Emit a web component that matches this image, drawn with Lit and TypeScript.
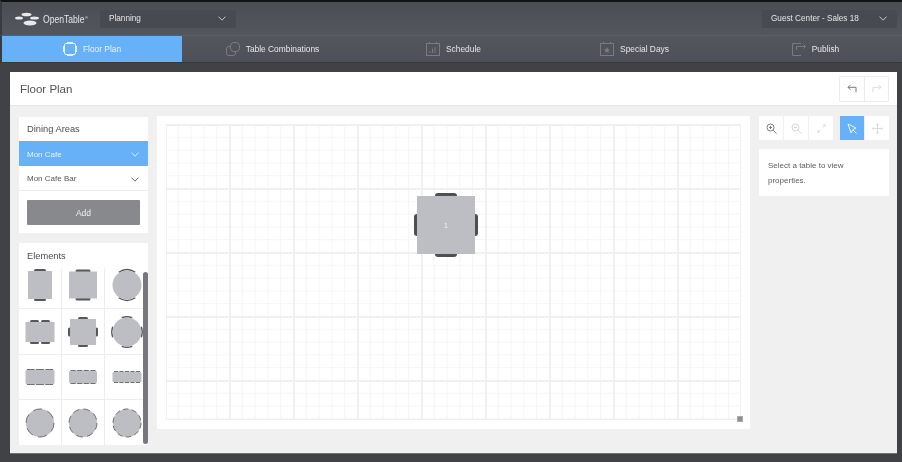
import { LitElement, html, css, svg } from "lit";
import { customElement } from "lit/decorators.js";

const FILL = "#bdbec3";
const SEAT = "#55575c";
const DASH = "#6e7075";

const chevron = html`<svg class="chev" width="8" height="5" viewBox="0 0 8 5"><path d="M.5.6 4 4.200 7.500.6" fill="none" stroke="currentColor" stroke-width=".9"/></svg>`;

// a square table with a seat bar on some of its sides
function rectTable(w: number, h: number, top: number[][], bottom: number[][], side = 0) {
  const x = 21 - w / 2;
  const y = 22 - h / 2;
  const bars = (list: number[][], yy: number) =>
    list.map(([a, len]) => svg`<rect x=${a} y=${yy} width=${len} height="3" rx="1.500" fill=${SEAT}/>`);
  return svg`
    ${bars(top, y - 2)}
    ${bars(bottom, y + h - 1)}
    ${side ? svg`<rect x=${x - 2} y=${22 - side / 2} width="3" height=${side} rx="1.500" fill=${SEAT}/>
      <rect x=${x + w - 1} y=${22 - side / 2} width="3" height=${side} rx="1.500" fill=${SEAT}/>` : ""}
    <rect x=${x} y=${y} width=${w} height=${h} fill=${FILL}/>`;
}

function seats(count: number, len: number, gap: number) {
  const total = count * len + (count - 1) * gap;
  const start = 21 - total / 2;
  return Array.from({ length: count }, (_, i) => [start + i * (len + gap), len]);
}

function dashedRect(w: number, h: number, count: number) {
  const x = 21 - w / 2;
  const y = 22 - h / 2;
  const gap = 1.500;
  const dash = (w - 3 - gap * (count - 1)) / count;
  const line = (yy: number) =>
    svg`<line x1=${x + 1.500} x2=${x + w - 1.500} y1=${yy} y2=${yy} stroke=${DASH} stroke-dasharray="${dash} ${gap}"/>`;
  return svg`<rect x=${x} y=${y} width=${w} height=${h} rx="2" fill=${FILL}/>${line(y)}${line(y + h)}`;
}

function arcSeat(r: number, deg: number, sweep: number) {
  const pt = (a: number) => {
    const t = (a * Math.PI) / 180;
    return `${21 + r * Math.cos(t)} ${22 + r * Math.sin(t)}`;
  };
  return svg`<path d="M${pt(deg - sweep / 2)}A${r} ${r} 0 0 1 ${pt(deg + sweep / 2)}" fill="none" stroke=${SEAT} stroke-width="1.400"/>`;
}

function roundTable(r: number, angles: number[], sweep: number) {
  return svg`${angles.map((a) => arcSeat(r + 0.7, a, sweep))}<circle cx="21" cy="22" r=${r} fill=${FILL}/>`;
}

function dashedRound(r: number, count: number) {
  const c = 2 * Math.PI * r;
  const on = (c / count) * 0.62;
  return svg`<circle cx="21" cy="22" r=${r} fill=${FILL} stroke=${DASH} stroke-width="1" stroke-dasharray="${on} ${c / count - on}"/>`;
}

const elementsList = [
  rectTable(24, 28, seats(1, 12, 0), seats(1, 12, 0)),
  rectTable(28, 27, seats(1, 15, 0), seats(1, 15, 0)),
  roundTable(14.5, [-90, 90], 66),
  rectTable(29, 20, seats(2, 9, 2), seats(2, 9, 2)),
  rectTable(26, 26, seats(1, 10, 0), seats(1, 10, 0), 9),
  roundTable(14.5, [-90, 0, 90, 180], 40),
  dashedRect(29, 15, 3),
  dashedRect(28, 13, 4),
  dashedRect(29, 11, 5),
  dashedRound(14, 6),
  dashedRound(14, 8),
  dashedRound(14, 10),
];

const navItems = [
  {
    label: "Floor Plan",
    icon: svg`<rect x="1.500" y="1.500" width="11" height="11" rx="1.500"/><path d="M4 .5h6M4 13.500h6M.5 4v6M13.500 4v6"/>`,
  },
  {
    label: "Table Combinations",
    icon: svg`<rect x="4.500" y=".5" width="9" height="9" rx="3.500"/><path d="M4 4.500H3A2.500 2.500 0 0 0 .5 7v4A2.500 2.500 0 0 0 3 13.500h4A2.500 2.500 0 0 0 9.500 11v-1"/>`,
  },
  {
    label: "Schedule",
    icon: svg`<rect x=".5" y="1.500" width="13" height="12"/><path d="M3.500 0v2M10.500 0v2M4 11V9M6.500 11V6.500M9 11V5"/>`,
  },
  {
    label: "Special Days",
    icon: svg`<rect x=".5" y="1.500" width="13" height="12"/><path d="M3.500 0v2M10.500 0v2"/><path d="m7 5 1 2.200 2 .2-1.500 1.400.4 2L7 9.900l-1.900.9.400-2L4 7.400l2-.2z" fill="currentColor" stroke="none"/>`,
  },
  {
    label: "Publish",
    icon: svg`<path d="M9 13.500H.5V1.500H9M4.500 8V4.500h9M11.500 2.500l2 2-2 2"/>`,
  },
];

@customElement("app-root")
export class AppRoot extends LitElement {
  static styles = css`
    * {
      margin: 0;
      padding: 0;
      box-sizing: border-box;
    }
    :host {
      display: flex;
      flex-direction: column;
      width: 902px;
      height: 462px;
      overflow: hidden;
      background: #404246;
      font-family: "Liberation Sans", Arial, sans-serif;
      color: #55575c;
      filter: blur(0.35px);
    }
    .topbar {
      height: 35px;
      flex: none;
      border-top: 2px solid #111214;
      border-left: 2px solid #3a3b3f;
      background: linear-gradient(#4b4d54, #53565d);
      display: flex;
      align-items: center;
      padding: 0 5px 0 13px;
    }
    .logo {
      display: flex;
      align-items: center;
      gap: 4px;
      width: 85px;
      color: #e4e5e7;
      font-size: 11px;
      white-space: nowrap;
    }
    .logo .name {
      display: inline-block;
      width: 41px;
      transform: scaleX(0.78);
      transform-origin: left center;
    }
    .logo .tm {
      font-size: 4px;
      align-self: flex-start;
      margin: 3px 0 0 -3px;
    }
    .select {
      height: 18px;
      background: #484a51;
      border-radius: 2px;
      color: #e6e6e8;
      font-size: 8.200px;
      display: flex;
      align-items: center;
      justify-content: space-between;
      padding: 0 10px 0 9px;
    }
    .select.plan {
      width: 136px;
    }
    .select.guest {
      width: 135px;
      margin-left: auto;
    }
    .select .chev {
      color: #d4d5d8;
    }
    .nav {
      height: 28px;
      flex: none;
      border-top: 1px solid #5c5e65;
      border-left: 2px solid #3a3b3f;
      border-bottom: 1px solid #36383c;
      background: linear-gradient(#53565d, #4d5056);
      display: grid;
      grid-template-columns: 180px repeat(4, 181px);
      overflow: hidden;
    }
    .nav-item {
      display: flex;
      align-items: center;
      justify-content: center;
      gap: 6px;
      color: #e6e7e9;
      font-size: 8.400px;
    }
    .nav-item svg {
      color: #797b80;
    }
    .nav-item.active {
      background: #66b1f8;
      color: #eaf4fe;
    }
    .nav-item.active svg {
      color: #e4f1fe;
    }
    .card {
      flex: 1;
      min-height: 0;
      margin: 9px 5px 9px 10px;
      background: #f0f0f0;
      display: flex;
      flex-direction: column;
      box-shadow: 0 1px 0 #707277;
    }
    .title {
      height: 34px;
      flex: none;
      background: #fff;
      border-bottom: 1px solid #e6e6e6;
      display: flex;
      align-items: center;
      justify-content: space-between;
      padding: 0 8px 0 10px;
      font-size: 11.500px;
      color: #505257;
    }
    .history {
      display: flex;
      border: 1px solid #ececec;
      border-radius: 1px;
    }
    .history span {
      width: 24px;
      height: 24px;
      display: flex;
      align-items: center;
      justify-content: center;
      color: #77797d;
    }
    .history span + span {
      border-left: 1px solid #ececec;
      color: #dcdcdc;
    }
    .main {
      flex: 1;
      min-height: 0;
      display: grid;
      grid-template-columns: 129px 593px 130px;
      column-gap: 9px;
      padding: 10px 0 0 9px;
    }
    .side {
      display: flex;
      flex-direction: column;
      gap: 10px;
      padding-top: 1px;
    }
    .panel {
      background: #fff;
    }
    .panel h2 {
      height: 24px;
      display: flex;
      align-items: center;
      padding-left: 8px;
      font-size: 9.300px;
      font-weight: 400;
      color: #4b4d52;
    }
    .area {
      height: 25px;
      display: flex;
      align-items: center;
      justify-content: space-between;
      padding: 1px 9px 0 8px;
      font-size: 8px;
      border-bottom: 1px solid #ededed;
    }
    .area.active {
      background: #66b1f8;
      color: #e6f2fe;
      border-bottom: none;
    }
    .area .chev {
      margin-top: 1px;
    }
    .add-wrap {
      padding: 9px 8px 8px;
    }
    .add {
      width: 100%;
      height: 25px;
      border: none;
      border-radius: 1px;
      background: #88898d;
      color: #f0f0f1;
      font: inherit;
      font-size: 8.500px;
    }
    .elements {
      position: relative;
    }
    .elements h2 {
      height: 25px;
    }
    .el-grid {
      display: grid;
      grid-template-columns: 42px 43px 44px;
      grid-template-rows: 40px 46px 45px 46px;
    }
    .el-cell {
      display: flex;
      align-items: center;
      justify-content: center;
      overflow: hidden;
      border-top: 1px solid #ededed;
      border-left: 1px solid #ededed;
    }
    .el-cell:nth-child(3n + 1) {
      border-left: none;
    }
    .el-cell:nth-child(-n + 3) {
      border-top: none;
      padding-bottom: 6px;
    }
    .scrollbar {
      position: absolute;
      right: 0;
      top: 29px;
      bottom: 1px;
      width: 5px;
      border-radius: 3px;
      background: #77787d;
    }
    .canvas-panel {
      height: 313px;
      background: #fff;
      padding: 8px 9px;
    }
    .canvas {
      position: relative;
      width: 575px;
      height: 296px;
      border: 1px solid #efefef;
      background-color: #fff;
      background-image:
        linear-gradient(90deg, #f0f0f0 2px, transparent 2px),
        linear-gradient(#f0f0f0 2px, transparent 2px),
        linear-gradient(90deg, #f5f5f5 1px, transparent 1px),
        linear-gradient(#f5f5f5 1px, transparent 1px);
      background-size: 64px 64px, 64px 64px, 12.800px 12.800px, 12.800px 12.800px;
      background-position: -2px -1px;
    }
    .handle {
      position: absolute;
      right: -3px;
      bottom: -3px;
      width: 6px;
      height: 6px;
      background: #8e8f92;
      border: 1px solid #a9aaac;
    }
    .table {
      position: absolute;
      left: 250px;
      top: 71px;
      width: 58px;
      height: 58px;
      background: #bdbec3;
      display: flex;
      align-items: center;
      justify-content: center;
      color: #f2f2f3;
      font-size: 7px;
    }
    .seat {
      position: absolute;
      background: #4d4f54;
      border-radius: 3px 3px 0 0;
    }
    .seat.n {
      top: -3px;
      left: 18px;
      width: 22px;
      height: 3px;
    }
    .seat.s {
      bottom: -3px;
      left: 18px;
      width: 22px;
      height: 3px;
      border-radius: 0 0 3px 3px;
    }
    .seat.w {
      left: -3px;
      top: 18px;
      width: 3px;
      height: 22px;
      border-radius: 3px 0 0 3px;
    }
    .seat.e {
      right: -3px;
      top: 18px;
      width: 3px;
      height: 22px;
      border-radius: 0 3px 3px 0;
    }
    .tools {
      display: flex;
      flex-direction: column;
      gap: 9px;
    }
    .toolbar {
      display: flex;
      justify-content: space-between;
    }
    .tool-group {
      display: flex;
      gap: 1px;
    }
    .tool {
      width: 24px;
      height: 24px;
      background: #fff;
      display: flex;
      align-items: center;
      justify-content: center;
      color: #d4d5d6;
    }
    .tool.dark {
      color: #7c7e82;
    }
    .tool.active {
      background: #66b1f8;
      color: #e8f3fe;
    }
    .props {
      background: #fff;
      height: 47px;
      padding: 9px 9px;
      font-size: 8px;
      line-height: 15px;
      color: #5b5d61;
    }
  `;

  render() {
    return html`
      <div class="topbar">
        <div class="logo">
          <svg width="24" height="14" viewBox="0 0 24 14">
            <ellipse cx="4" cy="6" rx="4" ry="1.600" fill="#e8e9ea" />
            <ellipse cx="11.500" cy="2.500" rx="5" ry="1.800" fill="#e8e9ea" />
            <ellipse cx="19.500" cy="6" rx="4.500" ry="1.600" fill="#e8e9ea" />
            <ellipse cx="15" cy="11" rx="6.500" ry="2.500" fill="#e8e9ea" />
          </svg>
          <span class="name">OpenTable</span><span class="tm">®</span>
        </div>
        <div class="select plan"><span>Planning</span>${chevron}</div>
        <div class="select guest"><span>Guest Center - Sales 18</span>${chevron}</div>
      </div>

      <div class="nav">
        ${navItems.map(
          (item, i) => html`
            <div class="nav-item ${i === 0 ? "active" : ""}">
              <svg width="14" height="14" viewBox="0 0 14 14" fill="none" stroke="currentColor" stroke-width="1">${item.icon}</svg>
              <span>${item.label}</span>
            </div>
          `
        )}
      </div>

      <div class="card">
        <div class="title">
          <span>Floor Plan</span>
          <div class="history">
            <span><svg width="10" height="9" viewBox="0 0 10 9" fill="none" stroke="currentColor"><path d="M3.500.8 1 3.300l2.500 2.500M1 3.300h8v5"/></svg></span>
            <span><svg width="10" height="9" viewBox="0 0 10 9" fill="none" stroke="currentColor"><path d="M6.500.8 9 3.300 6.500 5.800M9 3.300H1v5"/></svg></span>
          </div>
        </div>

        <div class="main">
          <div class="side">
            <div class="panel">
              <h2>Dining Areas</h2>
              <div class="area active"><span>Mon Cafe</span>${chevron}</div>
              <div class="area"><span>Mon Cafe Bar</span>${chevron}</div>
              <div class="add-wrap"><button class="add">Add</button></div>
            </div>
            <div class="panel elements">
              <h2>Elements</h2>
              <div class="el-grid">
                ${elementsList.map(
                  (shape) => html`<div class="el-cell"><svg width="42" height="44" viewBox="0 0 42 44">${shape}</svg></div>`
                )}
              </div>
              <div class="scrollbar"></div>
            </div>
          </div>

          <div class="canvas-panel">
            <div class="canvas">
              <div class="table">
                1
                <i class="seat n"></i><i class="seat s"></i><i class="seat w"></i><i class="seat e"></i>
              </div>
              <div class="handle"></div>
            </div>
          </div>

          <div class="tools">
            <div class="toolbar">
              <div class="tool-group">
                <div class="tool dark">
                  <svg width="11" height="11" viewBox="0 0 11 11" fill="none" stroke="currentColor"><circle cx="4.500" cy="4.500" r="3.500"/><path d="m7 7 3.500 3.500M3 4.500h3M4.500 3v3"/></svg>
                </div>
                <div class="tool">
                  <svg width="11" height="11" viewBox="0 0 11 11" fill="none" stroke="currentColor"><circle cx="4.500" cy="4.500" r="3.500"/><path d="m7 7 3.500 3.500M3 4.500h3"/></svg>
                </div>
                <div class="tool">
                  <svg width="9" height="9" viewBox="0 0 11 11" fill="none" stroke="currentColor"><path d="M6.500 4.500 10 1M7.500 1H10v2.500M4.500 6.500 1 10M1 7.500V10h2.500"/></svg>
                </div>
              </div>
              <div class="tool-group">
                <div class="tool active">
                  <svg width="11" height="11" viewBox="0 0 11 11" fill="none" stroke="currentColor"><path d="M1 1 4 10l1.700-3.300L9 5zM6 7l3.500 3.500"/></svg>
                </div>
                <div class="tool">
                  <svg width="11" height="11" viewBox="0 0 13 13" fill="none" stroke="currentColor"><path d="M6.500.5v12M.5 6.500h12M5 2l1.500-1.500L8 2M5 11l1.500 1.500L8 11M2 5 .5 6.500 2 8M11 5l1.500 1.500L11 8"/></svg>
                </div>
              </div>
            </div>
            <div class="props">Select a table to view properties.</div>
          </div>
        </div>
      </div>
    `;
  }
}
